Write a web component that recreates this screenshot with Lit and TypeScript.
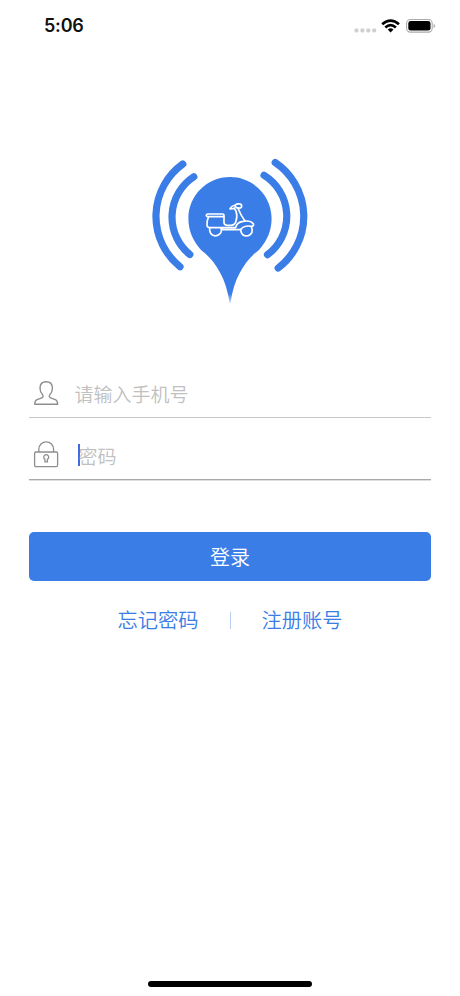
import { LitElement, html, css, svg } from "lit";
import { customElement } from "lit/decorators.js";

@customElement("status-bar")
class StatusBar extends LitElement {
  static styles = css`
    :host { display: flex; justify-content: space-between; align-items: center; height: 51px; box-sizing: border-box; padding: 0 24px 0 44px; }
    .time { font: 600 18px/22px Inter, sans-serif; color: #111; letter-spacing: -0.2px; }
    svg { display: block; }
  `;
  render() {
    return html`
      <span class="time">5:06</span>
      <svg width="83" height="20" viewBox="0 0 83 20">
        <g fill="#cfcfcf">
          ${[3.5, 9.4, 15.3, 21.2].map((x) => svg`<rect x=${x - 2} y="12.4" width="4" height="4" rx="1.4" />`)}
        </g>
        <g fill="none" stroke="#000" stroke-width="2.7">
          <path d="M29.2 8.3Q37.6 1.1 46 8.3" />
          <path d="M32.3 11.5Q37.6 6.9 42.9 11.5" />
        </g>
        <path d="M34.7 13.4Q37.6 11.2 40.5 13.4L37.6 16.4Z" />
        <rect x="53.6" y="3.5" width="25.6" height="12.6" rx="3.8" fill="#fff" stroke="#aaa" stroke-width="1.1" />
        <rect x="55.3" y="5" width="22.2" height="9.6" rx="2.4" />
        <path d="M80.6 7.9Q82.2 8.5 82.2 9.9T80.6 11.9Z" fill="#aaa" />
      </svg>
    `;
  }
}

@customElement("scooter-logo")
class ScooterLogo extends LitElement {
  static styles = css`
    :host { display: block; }
    svg { display: block; }
  `;
  render() {
    return html`
      <svg width="180" height="165" viewBox="0 0 180 165">
        <defs>
          <linearGradient id="tip" x1="0" y1="32" x2="0" y2="159" gradientUnits="userSpaceOnUse">
            <stop offset="0.92" stop-color="#3a7de6" />
            <stop offset="1" stop-color="#3a7de6" stop-opacity="0.2" />
          </linearGradient>
        </defs>
        <g fill="none" stroke="#3a7de6" stroke-width="7.2" stroke-linecap="round">
          <path d="M42.8 19A64.6 64.6 0 0 0 40 121.7" />
          <path d="M53.8 31.7A48.3 48.3 0 0 0 49.8 109.5" />
          <path d="M135.2 17.5A65 65 0 0 1 138.2 123" />
          <path d="M124 30.3A48 48 0 0 1 127.5 109.6" />
        </g>
        <path fill="url(#tip)" d="M90 32.1C113 32.1 131.6 50.6 131.6 73.6C131.6 86 127 96 119 105C108 113 94 130 90.6 158H89.6C86 130 72 113 61 105C53 96 48.4 86 48.4 73.6C48.4 50.6 67 32.1 90 32.1Z" />
        <g transform="scale(.3333)" fill="none" stroke="#fff" stroke-width="5" stroke-linecap="round" stroke-linejoin="round">
          <path d="M203 207H248Q252 207 252 211V215H203Q198 214 199 210Q200 207 203 207Z" />
          <path d="M205 217Q200 228 201 241Q202 248 210 248H287Q290 232 309 229Q331 225 340 236Q343 243 335 244Q312 240 302 254H248L242 248" />
          <path d="M252 216V232Q252 241 261 241H274Q285 240 288 229Q293 212 288 198L283 190" />
          <path d="M270 191Q275 182 286 180M283 190L272 192M286 180Q291 175 301 177Q307 180 304 187Q300 191 289 188Q284 185 286 180Z" />
          <path d="M294 190Q302 211 315 228" />
          <path d="M209 249Q208 266 219 271Q233 276 242 264Q245 258 244 250" />
          <path d="M302 253Q303 269 314 272Q329 275 336 262Q338 252 334 245" />
        </g>
      </svg>
    `;
  }
}

@customElement("app-root")
class AppRoot extends LitElement {
  static styles = css`
    :host {
      display: flex; flex-direction: column; height: 996px; box-sizing: border-box;
      background: #fff; font-family: "Noto Sans CJK SC", sans-serif; font-weight: 350;
    }
    .logo { align-self: center; margin-top: 94px; }
    .form { margin: 60px 29px 0; display: flex; flex-direction: column; }
    .field { display: flex; align-items: center; box-sizing: border-box; height: 48px; border-bottom: 1px solid #c8c8c8; color: #c0c0c0; font-size: 19px; line-height: 28px; }
    .field.active { height: 62px; padding-top: 12px; border-bottom-color: #aaa; box-shadow: 0 1px 0 #dedede; }
    .field svg { display: block; flex: none; margin-left: 4px; margin-bottom: 2px; }
    .hint { margin-left: 14.5px; padding-top: 1px; }
    .caret { width: 2px; height: 22px; background: #4169e1; margin-left: 18px; }
    .active .hint { margin-left: -1.5px; padding-top: 2px; }
    .login { height: 49px; margin-top: 52px; border: 0; border-radius: 5px; padding: 0; background: #3a7de6; color: #fff; font: 350 20px/49px "Noto Sans CJK SC", sans-serif; }
    .links { display: flex; justify-content: center; align-items: center; margin-top: 23px; height: 32px; color: #3a7de6; font-size: 20.25px; line-height: 32px; }
    .rule { width: 1px; height: 17px; margin: 0 31px; background: #b9cdf0; }
    .home { width: 164px; height: 6px; border-radius: 3px; background: #000; margin: auto auto 9px; }
  `;
  render() {
    return html`
      <status-bar></status-bar>
      <scooter-logo class="logo"></scooter-logo>
      <div class="form">
        <div class="field">
          <svg width="27" height="30" viewBox="0 0 27 30" fill="none" stroke="#8e8e8e" stroke-width="1.4" stroke-linejoin="round">
            <path d="M13.2 3.7C9.2 3.7 7 6.3 7 10.2C7 13.2 8.2 15.3 9.5 16.6C10.7 18.2 10.1 19.5 8.2 20.2L4 21.7C2.3 22.4 1.9 23.8 1.7 26.2H24.7C24.5 23.8 24.1 22.4 22.4 21.7L18.2 20.2C16.3 19.5 15.7 18.2 16.9 16.6C18.2 15.3 19.4 13.2 19.4 10.2C19.4 6.3 17.2 3.7 13.2 3.7Z" />
          </svg>
          <span class="hint">请输入手机号</span>
        </div>
        <div class="field active">
          <svg width="27" height="30" viewBox="0 0 27 30" fill="none" stroke="#8e8e8e" stroke-width="1.3">
            <rect x="1.6" y="13" width="23" height="14.6" rx="1.3" />
            <path d="M5.8 13V10.3A7.4 7.4 0 0 1 20.6 10.3V13" />
            <path d="M12 20.4A2.5 2.5 0 1 1 14.4 20.4V22.9H12Z" />
          </svg>
          <span class="caret"></span>
          <span class="hint">密码</span>
        </div>
        <button class="login">登录</button>
        <div class="links">
          <span>忘记密码</span><span class="rule"></span><span>注册账号</span>
        </div>
      </div>
      <div class="home"></div>
    `;
  }
}
